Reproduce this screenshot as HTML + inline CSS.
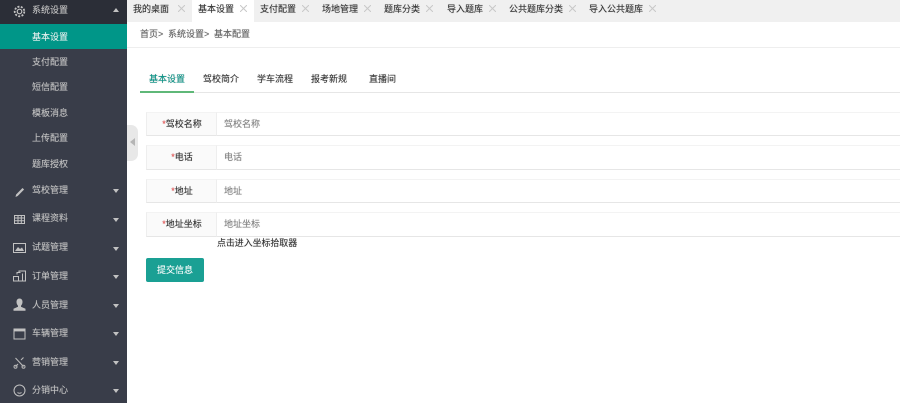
<!DOCTYPE html>
<html lang="zh-CN">
<head>
<meta charset="utf-8">
<title>基本设置</title>
<style>
html,body{margin:0;padding:0;width:900px;height:403px;overflow:hidden;background:#fff}
body{position:relative;font-family:"Liberation Sans","Noto Sans CJK SC",sans-serif;font-size:9px;color:#333}
.a{position:absolute;white-space:nowrap;line-height:12px;text-shadow:0 0 .6px rgba(40,40,40,.55)}
.side{position:absolute;left:0;top:0;width:127px;height:403px;background:#393d49}
.top{position:absolute;left:0;top:0;width:127px;height:24px;background:#2b2e37}
.act{position:absolute;left:0;top:24px;width:127px;height:25px;background:#009688}
.s{position:absolute;left:32px;white-space:nowrap;line-height:12px;color:#c2c2c2;text-shadow:0 0 .6px rgba(194,194,194,.6)}
.arr{position:absolute;left:113px;width:0;height:0;border-left:3.500px solid transparent;border-right:3.500px solid transparent;border-top:4px solid #c2c2c2}
.ic{position:absolute;left:12px;width:15px;height:15px}
.bar{position:absolute;left:127px;top:0;width:773px;height:22px;background:#f0f0f0}
.tabon{position:absolute;left:192px;top:0;width:62px;height:22px;background:#fff}
.x{position:absolute;width:7px;height:7px;top:5px}
.lab{position:absolute;left:146px;width:71px;background:#fafafa;border:1px solid #eee;border-top-color:#f3f3f3;border-bottom-color:#e6e6e6;box-sizing:border-box;text-align:center;color:#333;padding-left:1px;text-shadow:0 0 .6px rgba(40,40,40,.55)}
.inp{position:absolute;left:216px;width:700px;border:1px solid #eee;border-top-color:#f3f3f3;border-bottom-color:#e6e6e6;box-sizing:border-box;color:#808080;padding-left:7px;text-shadow:0 0 .6px rgba(120,120,120,.5)}
.star{color:#f55}
</style>
</head>
<body>
<div class="side"></div>
<div class="top"></div>
<div class="act"></div>

<svg class="ic" style="top:4px" viewBox="0 0 15 15" fill="none" stroke="#c2c2c2"><circle cx="7.500" cy="7.500" r="2.300" stroke-width="1.200"/><circle cx="7.500" cy="7.500" r="4.800" stroke-width="1.800" stroke-dasharray="2 1.400"/></svg>
<div class="s" style="top:4px">系统设置</div>
<div class="arr" style="top:8px;border-top:0;border-bottom:4px solid #c2c2c2"></div>
<div class="s" style="top:31px;color:#e8f5f3">基本设置</div>
<div class="s" style="top:56px">支付配置</div>
<div class="s" style="top:81px">短信配置</div>
<div class="s" style="top:107px">模板消息</div>
<div class="s" style="top:132px">上传配置</div>
<div class="s" style="top:158px">题库授权</div>

<svg class="ic" style="top:184px" viewBox="0 0 15 15"><path d="M3.500 13l.6-2.500 6.400-6.500 1.600 1.500-6.400 6.500z" fill="#c2c2c2"/></svg>
<div class="s" style="top:184px">驾校管理</div><div class="arr" style="top:189px"></div>

<svg class="ic" style="top:212px" viewBox="0 0 15 15" fill="none" stroke="#c2c2c2" stroke-width="1"><path d="M2.500 3.500h10v8h-10zM2.500 6h10M2.500 8.700h10M6 3.500v8M9.300 3.500v8"/></svg>
<div class="s" style="top:212px">课程资料</div><div class="arr" style="top:218px"></div>

<svg class="ic" style="top:240px" viewBox="0 0 15 15" fill="none" stroke="#c2c2c2" stroke-width="1"><path d="M1.500 3.500h12v9h-12z"/><path d="M3 11l3-4 2 2 2-1.500 2 3.500z" fill="#c2c2c2" stroke="none"/></svg>
<div class="s" style="top:241px">试题管理</div><div class="arr" style="top:247px"></div>

<svg class="ic" style="top:268px" viewBox="0 0 15 15" fill="none" stroke="#c2c2c2" stroke-width="1"><path d="M1.500 8.500h5v4.500h-5zM5 6.500v-2h3.500M7 4.500v-1.500h6.500v10h-7"/><path d="M10.500 5.500v7.500"/></svg>
<div class="s" style="top:270px">订单管理</div><div class="arr" style="top:275px"></div>

<svg class="ic" style="top:297px" viewBox="0 0 15 15"><path d="M7.500 1.500c2 0 3 1.500 3 3.500 0 1.500-.7 3-1.500 3.700v1l4.500 2v2h-12v-2l4.500-2v-1C5.200 8 4.500 6.500 4.500 5c0-2 1-3.500 3-3.500z" fill="#c2c2c2"/></svg>
<div class="s" style="top:299px">人员管理</div><div class="arr" style="top:304px"></div>

<svg class="ic" style="top:326px" viewBox="0 0 15 15" fill="none" stroke="#c2c2c2"><path d="M2 3h11v10h-11z" stroke-width="1"/><path d="M2 4.200h11" stroke-width="2.400"/></svg>
<div class="s" style="top:327px">车辆管理</div><div class="arr" style="top:332px"></div>

<svg class="ic" style="top:355px" viewBox="0 0 15 15" fill="none" stroke="#b8b8b8" stroke-width="1.100"><path d="M3.500 3l8 8.500M11.500 2.500l-2.500 2.500M6 9l-2.500 2.500"/><circle cx="3.500" cy="11.800" r="1.500" stroke-width="1"/><circle cx="11.500" cy="11.800" r="1.500" stroke-width="1"/></svg>
<div class="s" style="top:356px">营销管理</div><div class="arr" style="top:361px"></div>

<svg class="ic" style="top:383px" viewBox="0 0 15 15" fill="none" stroke="#c2c2c2" stroke-width="1"><circle cx="7.500" cy="7.500" r="5.500"/><path d="M5.500 9.500c1 1 3 1 4 0"/></svg>
<div class="s" style="top:384px">分销中心</div><div class="arr" style="top:389px"></div>

<div class="a" style="left:127px;top:125px;width:11px;height:36px;background:#e8e8e8;border-radius:0 7px 7px 0"></div>
<div class="a" style="left:130px;top:138px;width:0;height:0;border-top:4.500px solid transparent;border-bottom:4.500px solid transparent;border-right:5px solid #b5b5b5"></div>

<div class="bar"></div>
<div class="tabon"></div>
<div class="a" style="left:133px;top:3px">我的桌面</div>
<div class="a" style="left:198px;top:3px">基本设置</div>
<div class="a" style="left:260px;top:3px">支付配置</div>
<div class="a" style="left:322px;top:3px">场地管理</div>
<div class="a" style="left:384px;top:3px">题库分类</div>
<div class="a" style="left:447px;top:3px">导入题库</div>
<div class="a" style="left:509px;top:3px">公共题库分类</div>
<div class="a" style="left:589px;top:3px">导入公共题库</div>
<svg class="x" style="left:178px" viewBox="0 0 7 7"><path d="M0 0l7 7M7 0l-7 7" stroke="#c8c8c8"/></svg>
<svg class="x" style="left:240px" viewBox="0 0 7 7"><path d="M0 0l7 7M7 0l-7 7" stroke="#c8c8c8"/></svg>
<svg class="x" style="left:302px" viewBox="0 0 7 7"><path d="M0 0l7 7M7 0l-7 7" stroke="#c8c8c8"/></svg>
<svg class="x" style="left:364px" viewBox="0 0 7 7"><path d="M0 0l7 7M7 0l-7 7" stroke="#c8c8c8"/></svg>
<svg class="x" style="left:426px" viewBox="0 0 7 7"><path d="M0 0l7 7M7 0l-7 7" stroke="#c8c8c8"/></svg>
<svg class="x" style="left:489px" viewBox="0 0 7 7"><path d="M0 0l7 7M7 0l-7 7" stroke="#c8c8c8"/></svg>
<svg class="x" style="left:569px" viewBox="0 0 7 7"><path d="M0 0l7 7M7 0l-7 7" stroke="#c8c8c8"/></svg>
<svg class="x" style="left:649px" viewBox="0 0 7 7"><path d="M0 0l7 7M7 0l-7 7" stroke="#c8c8c8"/></svg>

<div class="a" style="left:140px;top:28px;color:#666">首页&gt;</div>
<div class="a" style="left:168px;top:28px;color:#666">系统设置&gt;</div>
<div class="a" style="left:214px;top:28px;color:#666">基本配置</div>
<div class="a" style="left:127px;top:47px;width:773px;height:1px;background:#eee"></div>

<div class="a" style="left:149px;top:73px;color:#009688">基本设置</div>
<div class="a" style="left:203px;top:73px">驾校简介</div>
<div class="a" style="left:257px;top:73px">学车流程</div>
<div class="a" style="left:311px;top:73px">报考新规</div>
<div class="a" style="left:369px;top:73px">直播间</div>
<div class="a" style="left:140px;top:92px;width:760px;height:1px;background:#e6e6e6"></div>
<div class="a" style="left:140px;top:91px;width:54px;height:2px;background:#5fb878"></div>

<div class="lab" style="top:112px;height:24px;line-height:22px"><span class="star">*</span>驾校名称</div>
<div class="inp" style="top:112px;height:24px;line-height:22px">驾校名称</div>
<div class="lab" style="top:145px;height:25px;line-height:23px"><span class="star">*</span>电话</div>
<div class="inp" style="top:145px;height:25px;line-height:23px">电话</div>
<div class="lab" style="top:179px;height:24px;line-height:22px"><span class="star">*</span>地址</div>
<div class="inp" style="top:179px;height:24px;line-height:22px">地址</div>
<div class="lab" style="top:212px;height:25px;line-height:23px"><span class="star">*</span>地址坐标</div>
<div class="inp" style="top:212px;height:25px;line-height:23px">地址坐标</div>
<div class="a" style="left:217px;top:237px;letter-spacing:-.1px">点击进入坐标拾取器</div>
<div class="a" style="left:146px;top:258px;width:58px;height:24px;line-height:24px;background:#1aa094;border-radius:2px;color:#fff;text-align:center;text-shadow:0 0 .6px rgba(255,255,255,.6)">提交信息</div>
</body>
</html>
